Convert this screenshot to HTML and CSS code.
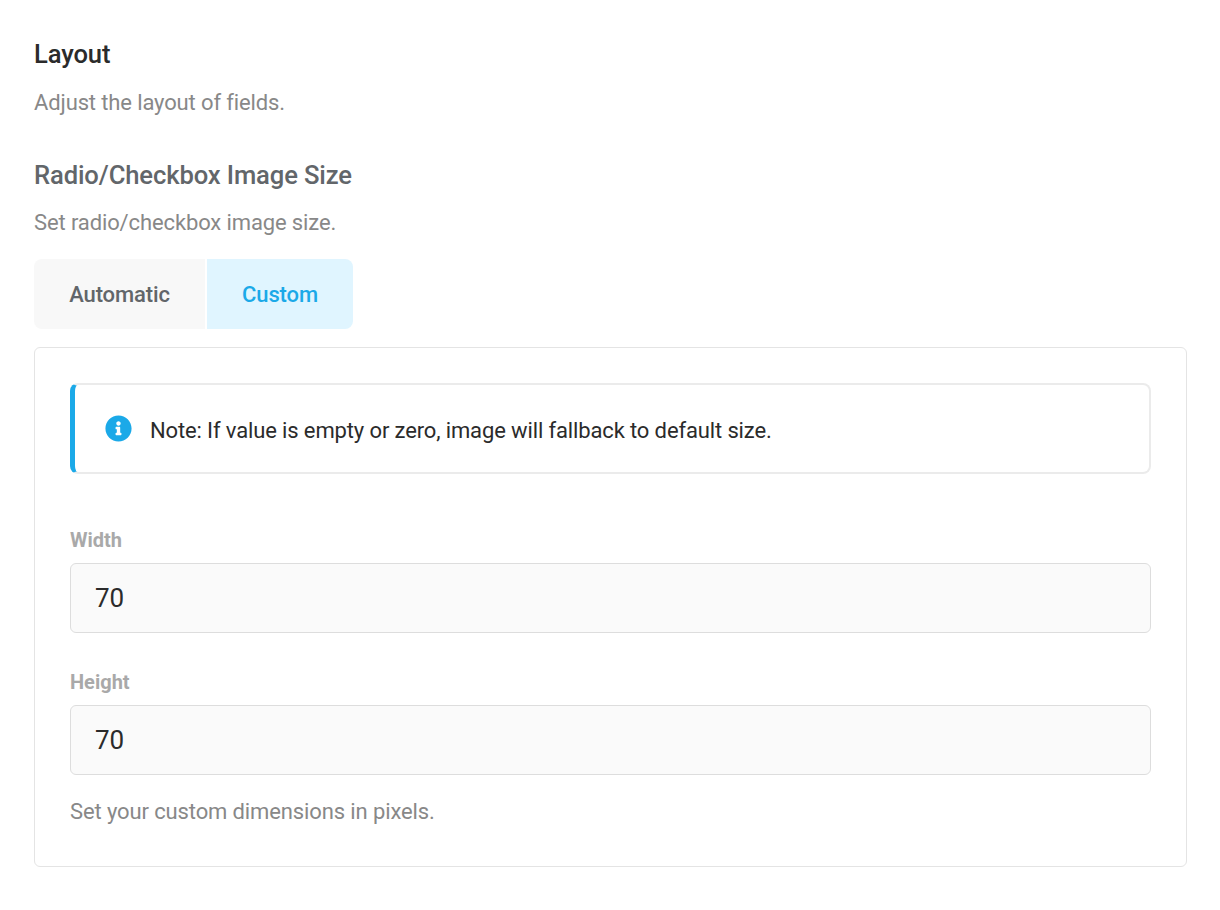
FILE: index.html
```html
<!DOCTYPE html>
<html lang="en">
<head>
<meta charset="utf-8">
<title>Layout</title>
<link rel="stylesheet" href="styles.css">
</head>
<body>
<main class="page">
  <h2 class="section-title">Layout</h2>
  <p class="section-desc">Adjust the layout of fields.</p>
  <h3 class="field-title">Radio/Checkbox Image Size</h3>
  <p class="field-desc">Set radio/checkbox image size.</p>
  <div class="tabs">
    <button class="tab tab-auto">Automatic</button>
    <button class="tab tab-custom">Custom</button>
  </div>
  <section class="panel">
    <div class="note">
      <svg class="note-icon" viewBox="0 0 512 512" width="27" height="27" aria-hidden="true"><path fill="#1ba9e8" d="M256 8C119.043 8 8 119.083 8 256c0 136.997 111.043 248 248 248s248-111.003 248-248C504 119.083 392.957 8 256 8zm0 110c23.196 0 42 18.804 42 42s-18.804 42-42 42-42-18.804-42-42 18.804-42 42-42zm56 254c0 6.627-5.373 12-12 12h-88c-6.627 0-12-5.373-12-12v-24c0-6.627 5.373-12 12-12h12v-64h-12c-6.627 0-12-5.373-12-12v-24c0-6.627 5.373-12 12-12h64c6.627 0 12 5.373 12 12v100h12c6.627 0 12 5.373 12 12v24z"/></svg>
      <span class="note-text">Note: If value is empty or zero, image will fallback to default size.</span>
    </div>
    <label class="input-label label-width">Width</label>
    <div class="input">70</div>
    <label class="input-label label-height">Height</label>
    <div class="input">70</div>
    <p class="panel-desc">Set your custom dimensions in pixels.</p>
  </section>
</main>
</body>
</html>
```
FILE: styles.css
```css
* { box-sizing: border-box; }
html, body { margin: 0; padding: 0; background: #fff; }
body { font-family: Roboto, "Liberation Sans", sans-serif; }
.page { width: 1220px; height: 910px; padding: 38px 33px 0 34px; display: flex; flex-direction: column; align-items: flex-start; }
.section-title { margin: 0; font-size: 25.6px; letter-spacing: -0.12px; line-height: 32px; font-weight: 500; color: #2b2b2b; }
.section-desc { margin: 17px 0 0; font-size: 22px; letter-spacing: -0.13px; line-height: 32px; color: #888; }
.field-title { margin: 40px 0 0; font-size: 25.6px; letter-spacing: -0.12px; line-height: 32px; font-weight: 500; color: #62666a; }
.field-desc { margin: 16px 0 0; font-size: 22px; letter-spacing: -0.12px; line-height: 32px; color: #888; }
.tabs { margin-top: 20px; display: flex; gap: 2px; }
.tab { height: 70px; border: 0; font: 500 22px Roboto, sans-serif; letter-spacing: -0.12px; padding: 0; }
.tab-auto { width: 171px; background: #f8f8f8; color: #62666a; border-radius: 8px 0 0 8px; }
.tab-custom { width: 146px; background: #e0f5ff; color: #1ba9e8; border-radius: 0 8px 8px 0; }
.panel { margin-top: 18px; width: 1153px; height: 520px; border: 1px solid #e4e4e4; border-radius: 6px; padding: 35px 35px 0; display: flex; flex-direction: column; align-items: stretch; }
.note { height: 91px; border: 2px solid #ebebeb; border-left: 5px solid #1ba9e8; border-radius: 8px; display: flex; align-items: center; padding-left: 30px; gap: 18px; }
.note-icon { flex: none; }
.note-text { margin-top: 4px; font-size: 22px; letter-spacing: -0.13px; color: #2b2b2b; }
.input-label { font-size: 20px; line-height: 28px; font-weight: 700; color: #a9a9a9; }
.label-width { margin-top: 52px; }
.label-height { margin-top: 35px; }
.input { margin-top: 9px; height: 70px; background: #fafafa; border: 1px solid #ddd; border-radius: 6px; padding-left: 24px; display: flex; align-items: center; font-size: 26px; color: #2b2b2b; }
.panel-desc { margin: 21px 0 0; font-size: 22px; letter-spacing: -0.12px; line-height: 32px; color: #888; }
```
